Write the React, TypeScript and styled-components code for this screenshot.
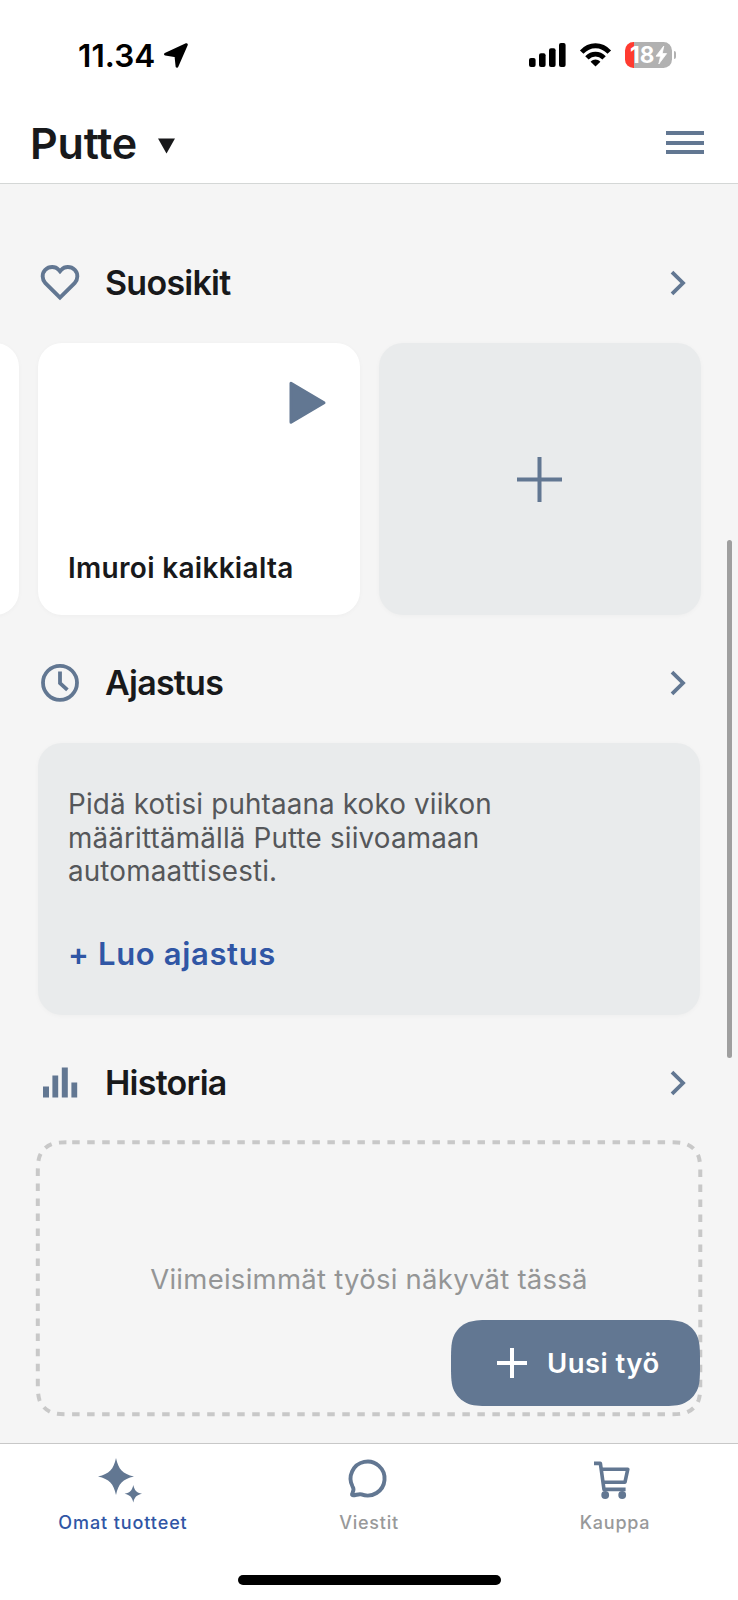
import React from "react";
import styled, { createGlobalStyle } from "styled-components";

const slate = "#627792";
const ink = "#18191b";

const GlobalStyle = createGlobalStyle`
  * { box-sizing: border-box; }
  body {
    margin: 0;
    background: #fff;
    font-family: Inter, "Liberation Sans", sans-serif;
    color: ${ink};
  }
  svg { display: block; flex: none; overflow: visible; }
  button { font: inherit; border: 0; background: none; padding: 0; }
`;

/* Outline of a rectangle with continuous (iOS style) corners, clockwise from the top left. */
function smoothRect(x: number, y: number, w: number, h: number, r: number) {
  const a = 1.52866 * r, b = 1.08849 * r, c = 0.86841 * r;
  const d = 0.63149 * r, e = 0.07491 * r, f = 0.37282 * r, g = 0.16906 * r;
  const R = x + w, B = y + h;
  return [
    `M${x + a} ${y}H${R - a}`,
    `C${R - b} ${y} ${R - c} ${y} ${R - d} ${y + e}`,
    `C${R - f} ${y + g} ${R - g} ${y + f} ${R - e} ${y + d}`,
    `C${R} ${y + c} ${R} ${y + b} ${R} ${y + a}V${B - a}`,
    `C${R} ${B - b} ${R} ${B - c} ${R - e} ${B - d}`,
    `C${R - g} ${B - f} ${R - f} ${B - g} ${R - d} ${B - e}`,
    `C${R - c} ${B} ${R - b} ${B} ${R - a} ${B}H${x + a}`,
    `C${x + b} ${B} ${x + c} ${B} ${x + d} ${B - e}`,
    `C${x + f} ${B - g} ${x + g} ${B - f} ${x + e} ${B - d}`,
    `C${x} ${B - c} ${x} ${B - b} ${x} ${B - a}V${y + a}`,
    `C${x} ${y + b} ${x} ${y + c} ${x + e} ${y + d}`,
    `C${x + g} ${y + f} ${x + f} ${y + g} ${x + d} ${y + e}`,
    `C${x + c} ${y} ${x + b} ${y} ${x + a} ${y}Z`,
  ].join("");
}

const Screen = styled.div`
  position: relative;
  width: 738px;
  height: 1600px;
  display: flex;
  flex-direction: column;
  overflow: hidden;
  background: #fff;
`;

const StatusBar = styled.div`
  height: 110px;
  padding: 0 62px 0 78px;
  display: flex;
  align-items: center;
  justify-content: space-between;
`;

const StatusGroup = styled.div<{ $gap: number }>`
  display: flex;
  align-items: center;
  gap: ${(p) => p.$gap}px;
  color: #000;
`;

const Time = styled.span`
  padding-top: 1px;
  font-size: 31.5px;
  font-weight: 600;
  letter-spacing: 0.1px;
  line-height: 40px;
`;

const Battery = styled.div`
  display: flex;
  align-items: center;
  gap: 2px;
`;

const BatteryBody = styled.div`
  width: 47px;
  height: 26px;
  border-radius: 8.5px;
  padding-left: 5px;
  display: flex;
  align-items: center;
  gap: 2px;
  color: #fff;
  font-size: 22.5px;
  font-weight: 700;
  letter-spacing: 0;
  line-height: 26px;
  background: linear-gradient(90deg, #ff3b30 9px, #b1b1b1 9px);
`;

const BatteryTip = styled.div`
  width: 2px;
  height: 8px;
  border-radius: 0 2px 2px 0;
  background: #b1b1b1;
`;

const Header = styled.header`
  height: 74px;
  padding: 0 34px 8px 30px;
  display: flex;
  align-items: center;
  justify-content: space-between;
  border-bottom: 1.5px solid #d4d7d6;
`;

const DeviceName = styled.h1`
  margin: 0;
  display: flex;
  align-items: center;
  gap: 20.5px;
  font-size: 43px;
  font-weight: 600;
  letter-spacing: -0.2px;
  line-height: 56px;
`;

const MenuButton = styled.button`
  width: 38px;
  display: flex;
  flex-direction: column;
  gap: 5.5px;
`;

const MenuLine = styled.span`
  height: 4px;
  background: ${slate};
`;

const Content = styled.main`
  flex: none;
  height: 1259px;
  padding: 37px 38px 0;
  background: #f5f5f5;
  overflow: hidden;
`;

const SectionHead = styled.div`
  height: 122px;
  padding: 1px 14px 0 0;
  display: flex;
  align-items: center;
`;

const SectionIcon = styled.div`
  width: 44px;
  display: flex;
  justify-content: center;
`;

const SectionTitle = styled.h2`
  margin: 0 auto 0 23px;
  padding-top: 1px;
  font-size: 34px;
  font-weight: 600;
  letter-spacing: -0.75px;
  line-height: 44px;
`;

const CardRow = styled.div`
  display: flex;
  justify-content: flex-end;
  gap: 19.5px;
  margin: 0 -0.5px 6px 0;
`;

const Card = styled.div<{ $muted?: boolean }>`
  flex: none;
  width: 321.5px;
  height: 272px;
  border-radius: 24px;
  box-shadow: 0 1px 5px rgba(0, 0, 0, 0.03);
  background: ${(p) => (p.$muted ? "#e9ebec" : "#fff")};
`;

const FavouriteCard = styled(Card)`
  display: flex;
  flex-direction: column;
  justify-content: space-between;
  padding: 38px 32.5px 29px 30px;
`;

const PlayRow = styled.div`
  display: flex;
  justify-content: flex-end;
`;

const FavouriteName = styled.span`
  font-size: 28px;
  font-weight: 560;
  letter-spacing: 0.3px;
  line-height: 36px;
  white-space: nowrap;
`;

const AddCard = styled(Card)`
  display: flex;
  align-items: center;
  justify-content: center;
`;

const ScheduleCard = styled(Card)`
  width: 662px;
  margin-bottom: 6px;
  padding: 45px 31px 0 30px;
`;

const ScheduleText = styled.p`
  margin: 0;
  width: 480px;
  color: #55575a;
  font-size: 27.8px;
  letter-spacing: 0.16px;
  line-height: 33.6px;
  white-space: nowrap;
`;

const ScheduleLink = styled.button`
  display: block;
  margin-top: 45px;
  color: #3056a5;
  font-size: 31px;
  font-weight: 570;
  letter-spacing: 0.65px;
  line-height: 40px;
`;

const HistoryBox = styled.div`
  width: 662px;
  height: 272px;
  display: grid;
  > * { grid-area: 1 / 1; }
`;

const HistoryText = styled.span`
  place-self: center;
  color: #949596;
  font-size: 27.5px;
  letter-spacing: 0.26px;
  white-space: nowrap;
`;

const NewJobButton = styled.button`
  position: absolute;
  left: 451px;
  top: 1320px;
  width: 249px;
  height: 86px;
  padding-left: 46px;
  display: flex;
  align-items: center;
  gap: 20px;
  background: ${slate};
  clip-path: path("${smoothRect(0, 0, 249, 86, 28)}");
  color: #fff;
  font-size: 27.5px;
  font-weight: 570;
  letter-spacing: 0.45px;
  white-space: nowrap;
`;

const ScrollThumb = styled.div`
  position: absolute;
  left: 726.5px;
  top: 539.5px;
  width: 5.5px;
  height: 518.5px;
  border-radius: 3px;
  background: #9f9f9f;
`;

const TabBar = styled.nav`
  height: 132px;
  display: grid;
  grid-template-columns: repeat(3, 1fr);
  border-top: 1.3px solid #c8c8c8;
`;

const Tab = styled.button<{ $active?: boolean; $shift: number }>`
  display: flex;
  flex-direction: column;
  align-items: center;
  padding-top: 13.5px;
  color: ${(p) => (p.$active ? "#3056a5" : "#98999a")};
  font-size: 18px;
  font-weight: 500;
  letter-spacing: ${(p) => (p.$active ? 0.9 : 0.75)}px;
  line-height: 24px;
  svg { margin: 0 ${(p) => p.$shift}px 7px 0; }
`;

const HomeIndicator = styled.div`
  width: 263px;
  height: 10px;
  border-radius: 5px;
  align-self: center;
  background: #000;
`;

const Chevron = () => (
  <svg width="16" height="26" viewBox="0 0 16 26" fill="none" stroke={slate} strokeWidth="3.8">
    <path d="M2 2.2L13 13L2 23.8" />
  </svg>
);

const Plus = ({ size, color }: { size: number; color: string }) => (
  <svg width={size} height={size} viewBox={`0 0 ${size} ${size}`} stroke={color} strokeWidth="4">
    <path d={`M0 ${size / 2}H${size}M${size / 2} 0V${size}`} />
  </svg>
);

const SectionHeader = ({ icon, title }: { icon: React.ReactNode; title: string }) => (
  <SectionHead>
    <SectionIcon>{icon}</SectionIcon>
    <SectionTitle>{title}</SectionTitle>
    <Chevron />
  </SectionHead>
);

const HeartIcon = () => (
  <svg width="40" height="38" viewBox="0 0 40 38" fill="none" stroke={slate} strokeWidth="3.9">
    <path d="M20 33.6L5.4 19.2C1.8 15.3 1.8 9.4 5.2 5.9C9.2 2 15.4 2.2 18.6 5.8L20 7.3L21.4 5.8C24.6 2.2 30.8 2 34.8 5.9C38.2 9.4 38.2 15.3 34.6 19.2Z" />
  </svg>
);

const ClockIcon = () => (
  <svg width="38" height="38" viewBox="0 0 38 38" fill="none" stroke={slate} strokeWidth="3.8">
    <circle cx="19" cy="18.8" r="17" />
    <path d="M19 7.5V19.2L26.4 25.8" />
  </svg>
);

const BarsIcon = () => (
  <svg width="34" height="30" viewBox="0 0 34 30" fill={slate}>
    <path d="M0 18.5h6v11H0zM9.4 7.5h5.8v22H9.4zM18.8 -.5h6v30h-6zM28.4 14.5h5.8v15h-5.8z" />
  </svg>
);

export default function App() {
  return (
    <>
      <GlobalStyle />
      <Screen>
        <StatusBar>
          <StatusGroup $gap={8.5}>
            <Time>11.34</Time>
            <svg width="24" height="25" viewBox="0 0 24 25">
              <path d="M1.4 11.2L22.4 1.6L13 23.3L11.9 12.8Z" fill="#000" stroke="#000" strokeWidth="2.8" strokeLinejoin="round" />
            </svg>
          </StatusGroup>
          <StatusGroup $gap={14}>
            <svg width="37" height="24" viewBox="0 0 37 24">
              <rect x="0" y="15" width="6.6" height="9" rx="2" />
              <rect x="10" y="10.3" width="6.6" height="13.7" rx="2" />
              <rect x="20" y="5.2" width="6.6" height="18.8" rx="2" />
              <rect x="30" y="0" width="6.6" height="24" rx="2" />
            </svg>
            <svg width="31" height="24" viewBox="0 0 31 24" fill="none" stroke="#000" strokeWidth="4.8">
              <path d="M1.7 9.1C9.5 .6 21.5 .6 29.3 9.1" />
              <path d="M6.9 14.9C12 9.9 19 9.9 24.1 14.9" />
              <path d="M15.5 23.6L10.6 18.7C13.6 15.9 17.4 15.9 20.4 18.7Z" fill="#000" stroke="none" />
            </svg>
            <Battery>
              <BatteryBody>
                18
                <svg width="11" height="18" viewBox="0 0 11 18" fill="#fff" stroke="#fff" strokeWidth="0.8" strokeLinejoin="round">
                  <path d="M7.8 0L0 10.2H4.6L2.8 18L10.6 7.6H6.2Z" />
                </svg>
              </BatteryBody>
              <BatteryTip />
            </Battery>
          </StatusGroup>
        </StatusBar>

        <Header>
          <DeviceName>
            Putte
            <svg width="17" height="15" viewBox="0 0 17 15" fill={ink}>
              <path d="M0 3.5H17L8.5 18.5Z" />
            </svg>
          </DeviceName>
          <MenuButton aria-label="Valikko">
            <MenuLine />
            <MenuLine />
            <MenuLine />
          </MenuButton>
        </Header>

        <Content>
          <SectionHeader icon={<HeartIcon />} title="Suosikit" />
          <CardRow>
            <Card />
            <FavouriteCard>
              <PlayRow>
                <svg width="38" height="43" viewBox="0 0 38 43" fill={slate} stroke={slate} strokeWidth="3" strokeLinejoin="round">
                  <path d="M2 2.2V41.2L35 21.7Z" />
                </svg>
              </PlayRow>
              <FavouriteName>Imuroi kaikkialta</FavouriteName>
            </FavouriteCard>
            <AddCard $muted>
              <Plus size={45} color={slate} />
            </AddCard>
          </CardRow>

          <SectionHeader icon={<ClockIcon />} title="Ajastus" />
          <ScheduleCard $muted>
            <ScheduleText>
              Pidä kotisi puhtaana koko viikon
              <br />
              määrittämällä Putte siivoamaan
              <br />
              automaattisesti.
            </ScheduleText>
            <ScheduleLink>+ Luo ajastus</ScheduleLink>
          </ScheduleCard>

          <SectionHeader icon={<BarsIcon />} title="Historia" />
          <HistoryBox>
            <svg width="662" height="272" fill="none" stroke="#c8c8c8" strokeWidth="4" strokeDasharray="7.5 7.51">
              <path d={smoothRect(-0.2, -0.7, 662.5, 272, 22.5)} />
            </svg>
            <HistoryText>Viimeisimmät työsi näkyvät tässä</HistoryText>
          </HistoryBox>
        </Content>

        <TabBar>
          <Tab $active $shift={5.5}>
            <svg width="44" height="46" viewBox="0 0 44 46" fill={slate}>
              <path d="M18 0C20.5 11.5 24.5 15.8 36 18.5C24.5 21.2 20.5 25.5 18 37C15.5 25.5 11.5 21.2 0 18.5C11.5 15.8 15.5 11.5 18 0Z" />
              <path d="M35.3 27C36.6 32.6 38.4 34.5 44 35.8C38.4 37.1 36.6 39 35.3 44.6C34 39 32.2 37.1 26.6 35.8C32.2 34.5 34 32.6 35.3 27Z" />
            </svg>
            Omat tuotteet
          </Tab>
          <Tab $shift={2}>
            <svg width="38" height="46" viewBox="0 0 38 46" fill="none" stroke={slate} strokeWidth="3.9" strokeLinejoin="round">
              <path d="M3.6 28.6A17 17 0 1 1 12.4 36.4C9.6 35.4 6 37.8 3.4 37.2C1.6 36.6 6.6 32.4 3.6 28.6Z" />
            </svg>
            Viestit
          </Tab>
          <Tab $shift={6}>
            <svg width="36" height="46" viewBox="0 0 36 46" fill="none" stroke={slate} strokeWidth="3.6" strokeLinejoin="round">
              <path d="M0 5.4H6.4L10 31.4H31.6" />
              <path d="M7.4 11.2H33.8L31 24.2H9" />
              <circle cx="11.2" cy="37" r="3.9" fill={slate} stroke="none" />
              <circle cx="28.2" cy="37" r="3.9" fill={slate} stroke="none" />
            </svg>
            Kauppa
          </Tab>
        </TabBar>
        <HomeIndicator />

        <NewJobButton>
          <Plus size={30} color="#fff" />
          Uusi työ
        </NewJobButton>
        <ScrollThumb />
      </Screen>
    </>
  );
}
